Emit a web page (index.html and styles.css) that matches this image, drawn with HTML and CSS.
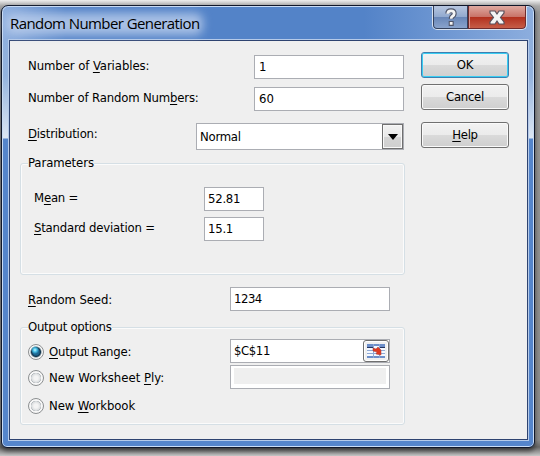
FILE: index.html
```html
<!DOCTYPE html>
<html lang="en">
<head>
<meta charset="utf-8">
<title>Random Number Generation</title>
<link rel="stylesheet" href="styles.css">
</head>
<body>
<main class="window">
  <header class="titlebar">
    <h1 class="title">Random Number Generation</h1>
    <div class="controls">
      <span class="control help-control"><svg width="16" height="20" viewBox="0 0 16 20"><path d="M4.8 6.5Q4.8 3.8 8 3.8Q11.2 3.8 11.2 6.5Q11.2 8.3 9.2 9.4Q8.2 10 8.2 12" fill="none" stroke="#50566a" stroke-width="5"/><path d="M5.7 14h5v5h-5z" fill="#50566a"/><path d="M4.800 6.800Q4.800 3.800 8 3.800Q11.200 3.800 11.200 6.500Q11.200 8.300 9.200 9.400Q8.200 10 8.200 11.700" fill="none" stroke="#f4f4f4" stroke-width="2.800"/><path d="M6.800 15h2.800v2.800H6.800z" fill="#f4f4f4"/></svg></span>
      <span class="control close-control"><svg width="16" height="15" viewBox="0 0 16 15"><path d="M1 1h5l2 3 2-3h5v2l-3.500 4.500L15 12v2h-5l-2-3-2 3H1v-2l3.500-4.500L1 3z" fill="#f4f4f4" stroke="#59515d" stroke-width="1.200"/></svg></span>
    </div>
  </header>
  <div class="client">
    <section class="form">
      <div class="row variables"><label>Number of <u>V</u>ariables:</label><div class="field wide">1</div></div>
      <div class="row numbers"><label>Number of Random Num<u>b</u>ers:</label><div class="field wide">60</div></div>
      <div class="row distribution"><label><u>D</u>istribution:</label><div class="field combo">Normal<span class="drop"><svg width="10" height="6" viewBox="0 0 10 6"><path d="M0 0h10L5 6z"/></svg></span></div></div>
      <div class="group parameters">
        <h2 class="legend params-legend">Parameters</h2>
        <div class="row mean"><label>M<u>e</u>an =</label><div class="field small">52.81</div></div>
        <div class="row deviation"><label><u>S</u>tandard deviation =</label><div class="field small">15.1</div></div>
      </div>
      <div class="row seed"><label><u>R</u>andom Seed:</label><div class="field medium">1234</div></div>
      <div class="group output">
        <h2 class="legend output-legend">Output options</h2>
        <div class="row range"><label class="option"><i class="radio checked"></i><span><u>O</u>utput Range:</span></label><div class="field medium">$C$11<span class="picker"><svg width="18" height="14" viewBox="0 0 18 14"><path fill="#f4f8ff" d="M0 0h18v14H0z"/><path fill="#6d8fca" d="M0 0h6v3H0zM7 0h5v2H7zM13 0h5v3h-5zM0 12h18v2H0z"/><path fill="#8fa9d4" d="M0 6h18v1H0zM0 9h18v1H0zM6 0h1v14H6zM12 0h1v14h-1z"/><path fill="#24345f" d="M0 3h6v1H0zM13 3h5v1h-5z"/><path d="M6 4l3 1 2-2 3 3v5l-5-1 1-2-4-1z" fill="#df3a20" stroke="#a63b3b" stroke-width=".5"/></svg></span></div></div>
        <div class="row worksheet"><label class="option"><i class="radio"></i><span>New Worksheet <u>P</u>ly:</span></label><div class="field medium disabled"></div></div>
        <label class="option workbook"><i class="radio"></i><span>New <u>W</u>orkbook</span></label>
      </div>
    </section>
    <nav class="actions">
      <button class="button primary">OK</button>
      <button class="button">Cancel</button>
      <button class="button help"><span><u>H</u>elp</span></button>
    </nav>
  </div>
</main>
</body>
</html>
```
FILE: styles.css
```css
* { box-sizing: border-box; }
body {
  margin: 0;
  width: 540px;
  height: 456px;
  padding: 5px 0 0 1px;
  overflow: hidden;
  background: linear-gradient(#eee, #aaa 6px, #999 12px, #8c8c8c 440px, #686868 447px, #c8c8c8 456px);
  font: 13px/16px "DejaVu Sans Condensed", "DejaVu Sans", sans-serif;
  font-stretch: condensed;
  color: #000;
}
.window {
  width: 534px;
  height: 443px;
  border: 1px solid #10172a;
  border-radius: 7px 7px 6px 6px;
  padding: 0 6px 0 7px;
  background:
    linear-gradient(90deg, rgba(160,188,229,.8), transparent 12%, transparent 68%, rgba(160,188,229,.75)) 0 0 / 100% 34px no-repeat,
    linear-gradient(#5383c8 0, #5383c8 34px, transparent 34px),
    linear-gradient(#8fafdc 34px, #94b3de 70px, #dce6f3 132px, #5585cb 133px);
  box-shadow: inset 0 0 0 1px #c9dcf5, 0 3px 5px rgba(0,0,0,.55);
}
.titlebar {
  height: 34px;
  display: flex;
  justify-content: space-between;
}
.title {
  margin: 6px 0 0 -5px;
  padding: 0 0 0 6px;
  height: 24px;
  font: 15px/23px "Open Sans", "Noto Sans", sans-serif;
  white-space: nowrap;
  background: radial-gradient(closest-side, rgba(190,208,236,.72) 75%, transparent);
  background: linear-gradient(90deg, rgba(182,202,233,.7), rgba(182,202,233,.7)) 0 4px / 180px 15px no-repeat;
  background: none;
  letter-spacing: -.58px;
  position: relative;
  isolation: isolate;
}
.title::before {
  content: "";
  position: absolute;
  z-index: -1;
  inset: 1px -3px 1px 2px;
  border-radius: 8px;
  background: rgba(190,208,236,.8);
  filter: blur(5px);
}
.controls {
  display: flex;
  width: 95px;
  height: 24px;
  margin-right: 1px;
  border: 1px solid #d7e1ef;
  border-top: 0;
  border-radius: 0 0 5px 5px;
  overflow: hidden;
}
.control {
  display: flex;
  align-items: center;
  justify-content: center;
  border: 1px solid #34415c;
  border-top: 0;
}
.help-control { width: 35px; background: linear-gradient(#b7c6df, #91a9cf 50%, #6987b8 52%, #89a3cc); border-radius: 0 0 0 4px; }
.close-control { width: 58px; background: linear-gradient(#dfaaa1, #c97469 48%, #b2301e 51%, #c65d47); border-color: #712c2d; border-radius: 0 0 4px 0; box-shadow: inset 1px 0 #d8968f; }
.client {
  width: 519px;
  height: 400px;
  border: 1px solid #2e4370;
  outline: 1px solid #b5cae9;
  background: #efefef;
  display: flex;
  padding: 0 0 0 10px;
}
.form { width: 385px; margin-right: 16px; }
.row {
  display: flex;
  justify-content: space-between;
  padding: 0 1px 0 8px;
}
label { white-space: nowrap; padding-top: 3px; }
u { text-decoration-thickness: 1px; text-underline-offset: 2px; }
.variables { margin-top: 14px; }
.variables label { letter-spacing: -.08px; }
.numbers { margin-top: 8px; }
.numbers label { letter-spacing: -.17px; }
.distribution { margin-top: 12px; }
.distribution label { letter-spacing: 0.22px; letter-spacing: -.2px; }
.field {
  height: 24px;
  border: 1px solid #abadb3;
  background: #fff;
  padding: 3px 4px;
  display: flex;
  justify-content: space-between;
}
.wide { width: 150px; }
.medium { width: 160px; }
.small { width: 60px; padding-left: 3px; letter-spacing: -.25px; }
.combo { width: 208px; height: 27px; padding: 0 0 0 3px; line-height: 25px; letter-spacing: -.25px; }
.drop {
  width: 21px;
  border: 1px solid #707070;
  box-shadow: inset 0 0 0 1px #f8f8f8;
  background: linear-gradient(#f2f2f2, #e8e8e8 50%, #d5d5d5 51%, #cfcfcf);
  display: flex;
  align-items: center;
  justify-content: center;
}
.group {
  border: 1px solid #d5dfe5;
  border-radius: 3px;
  box-shadow: inset 0 0 0 1px #fbfbfb;
}
.parameters { height: 112px; margin-top: 13px; }
.output { height: 98px; margin-top: 16px; }
.legend {
  margin: -9px 0 0 7px;
  font: inherit;
  width: fit-content;
  background: #efefef;
}
.output-legend { letter-spacing: -.28px; }
.params-legend { letter-spacing: -.1px; }
.parameters .row { padding: 0 140px 0 13px; }
.mean { margin-top: 16px; }
.mean label { letter-spacing: -.2px; }
.deviation { margin-top: 6px; }
.deviation label { letter-spacing: -.2px; }
.seed { margin-top: 12px; padding-right: 15px; }
.seed label { padding-top: 5px; letter-spacing: -.1px; }
.output .row { padding: 0 14px 0 7px; }
.range { margin-top: 4px; }
.range label { letter-spacing: -.25px; }
.worksheet { margin-top: 2px; }
.option { display: flex; align-items: center; gap: 5px; padding: 1px 0 0; height: 24px; }
.workbook { margin: 4px 0 0 7px; letter-spacing: -.1px; }
.radio {
  width: 16px;
  height: 16px;
  border-radius: 50%;
  border: 1px solid #8c8f91;
  background: radial-gradient(circle, #f4f4f4 0 2px, #d9dcde 4.500px, #aeb3b7 5px, #f7f7f7 5.500px);
}
.checked { background: radial-gradient(circle at 6px 5px, #c1f5ff 0, #42bce4 2px, transparent 4px), radial-gradient(circle, #1d6691 0 3px, #12364f 4.500px, #aebac0 5.500px, #f7f7f7 6px); }
.range .field { padding: 0 0 0 3px; line-height: 22px; letter-spacing: -.4px; }
.picker {
  width: 26px;
  height: 22px;
  border: 1px solid #707070;
  border-radius: 3px;
  display: flex;
  align-items: center;
  justify-content: center;
  background: #f0f0f0;
  box-shadow: inset 0 0 0 1px #fff;
}
.medium.disabled { padding: 0; background: linear-gradient(#efefef, #efefef) 3px 2px / 152px 16px no-repeat #fff; }
.seed .field { padding-left: 3px; letter-spacing: -.5px; }
.actions { width: 88px; display: flex; flex-direction: column; padding-top: 11px; }
.button {
  height: 26px;
  margin: 0 0 6px;
  padding: 0 0 1px;
  font: inherit;
  letter-spacing: -.3px;
  color: inherit;
  border: 1px solid #707070;
  border-radius: 3px;
  background: linear-gradient(#f2f2f2, #ebebeb 50%, #dadada 51%, #cfcfcf);
  box-shadow: inset 0 0 0 1px #fafafa;
}
.primary { border-color: #3c7fb1; box-shadow: inset 0 0 0 1px #39cdf2; }
.help { margin-top: 6px; }
```
